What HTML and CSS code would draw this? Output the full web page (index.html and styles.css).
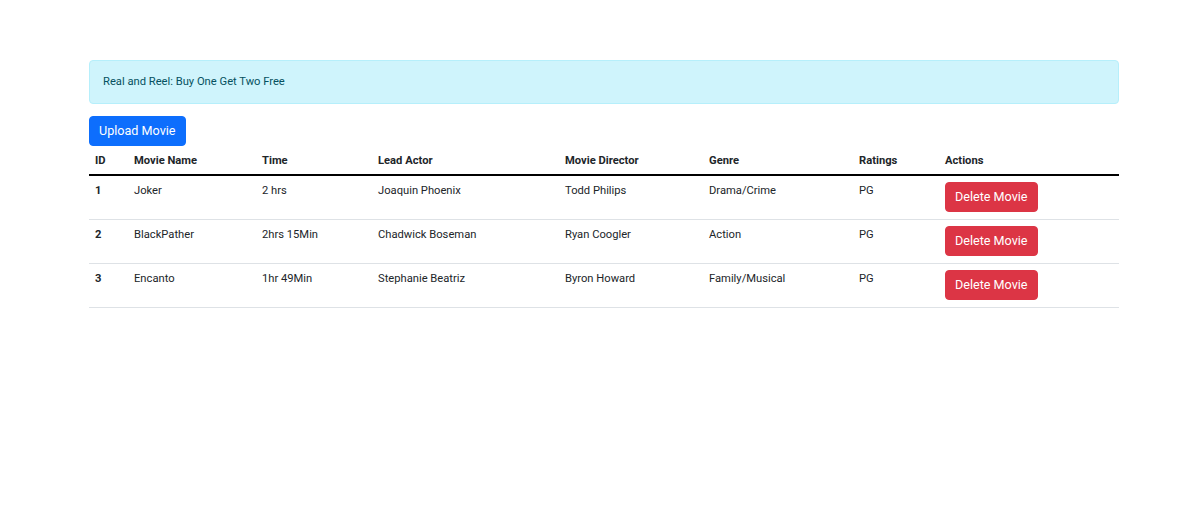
FILE: index.html
```html
<!DOCTYPE html>
<html lang="en">
<head>
    <meta charset="UTF-8">
    <meta name="viewport" content="width=device-width, initial-scale=1.0">
    <title>Real and Reel</title>
    <link rel="stylesheet" href="styles.css">
</head>
<body>
    <div class="container">
        <div class="alert">Real and Reel: Buy One Get Two Free</div>
        <button class="btn btn-primary">Upload Movie</button>
        <table class="movies">
            <thead>
                <tr>
                    <th class="col-id">ID</th>
                    <th class="col-name">Movie Name</th>
                    <th class="col-time">Time</th>
                    <th class="col-actor">Lead Actor</th>
                    <th class="col-director">Movie Director</th>
                    <th class="col-genre">Genre</th>
                    <th class="col-rating">Ratings</th>
                    <th class="col-actions">Actions</th>
                </tr>
            </thead>
            <tbody>
                <tr>
                    <th>1</th>
                    <td>Joker</td>
                    <td>2 hrs</td>
                    <td>Joaquin Phoenix</td>
                    <td>Todd Philips</td>
                    <td>Drama/Crime</td>
                    <td>PG</td>
                    <td><button class="btn btn-danger">Delete Movie</button></td>
                </tr>
                <tr>
                    <th>2</th>
                    <td>BlackPather</td>
                    <td>2hrs 15Min</td>
                    <td>Chadwick Boseman</td>
                    <td>Ryan Coogler</td>
                    <td>Action</td>
                    <td>PG</td>
                    <td><button class="btn btn-danger">Delete Movie</button></td>
                </tr>
                <tr>
                    <th>3</th>
                    <td>Encanto</td>
                    <td>1hr 49Min</td>
                    <td>Stephanie Beatriz</td>
                    <td>Byron Howard</td>
                    <td>Family/Musical</td>
                    <td>PG</td>
                    <td><button class="btn btn-danger">Delete Movie</button></td>
                </tr>
            </tbody>
        </table>
    </div>
</body>
</html>
```

FILE: styles.css
```css
body, html {
    font-family: Roboto, "Liberation Sans", Arial, sans-serif;
    margin: 0;
    padding: 0;
    color: #212529;
    background: #fff;
}
.container {
    width: 1030px;
    margin: 0 0 0 89px;
    padding-top: 60px;
}
.alert {
    background-color: #cff4fc;
    border: 1px solid #b6effb;
    color: #055160;
    border-radius: 4px;
    padding: 12px 13px 12px 13px;
    font-size: 11.2px;
    line-height: 18px;
    margin-bottom: 12px;
}
.btn {
    display: inline-block;
    font-family: inherit;
    font-size: 12.6px;
    line-height: 18px;
    padding: 5px 9px;
    border: 1px solid transparent;
    border-radius: 4px;
    color: #fff;
    cursor: pointer;
}
.btn-primary {
    background-color: #0d6efd;
    border-color: #0d6efd;
}
.btn-danger {
    background-color: #dc3545;
    border-color: #dc3545;
}
.movies {
    width: 100%;
    border-collapse: collapse;
    font-size: 11.2px;
    line-height: 17px;
}
.movies th, .movies td {
    text-align: left;
    vertical-align: top;
    padding: 6px;
    border-bottom: 1px solid #dee2e6;
}
.movies td {
    padding-bottom: 7px;
}
.movies thead th {
    font-weight: bold;
    border-bottom: 2px solid #000;
    padding: 6px 6px 5px;
}
.col-id { width: 27px; }
.col-name { width: 116px; }
.col-time { width: 104px; }
.col-actor { width: 175px; }
.col-director { width: 132px; }
.col-genre { width: 138px; }
.col-rating { width: 74px; }
```
